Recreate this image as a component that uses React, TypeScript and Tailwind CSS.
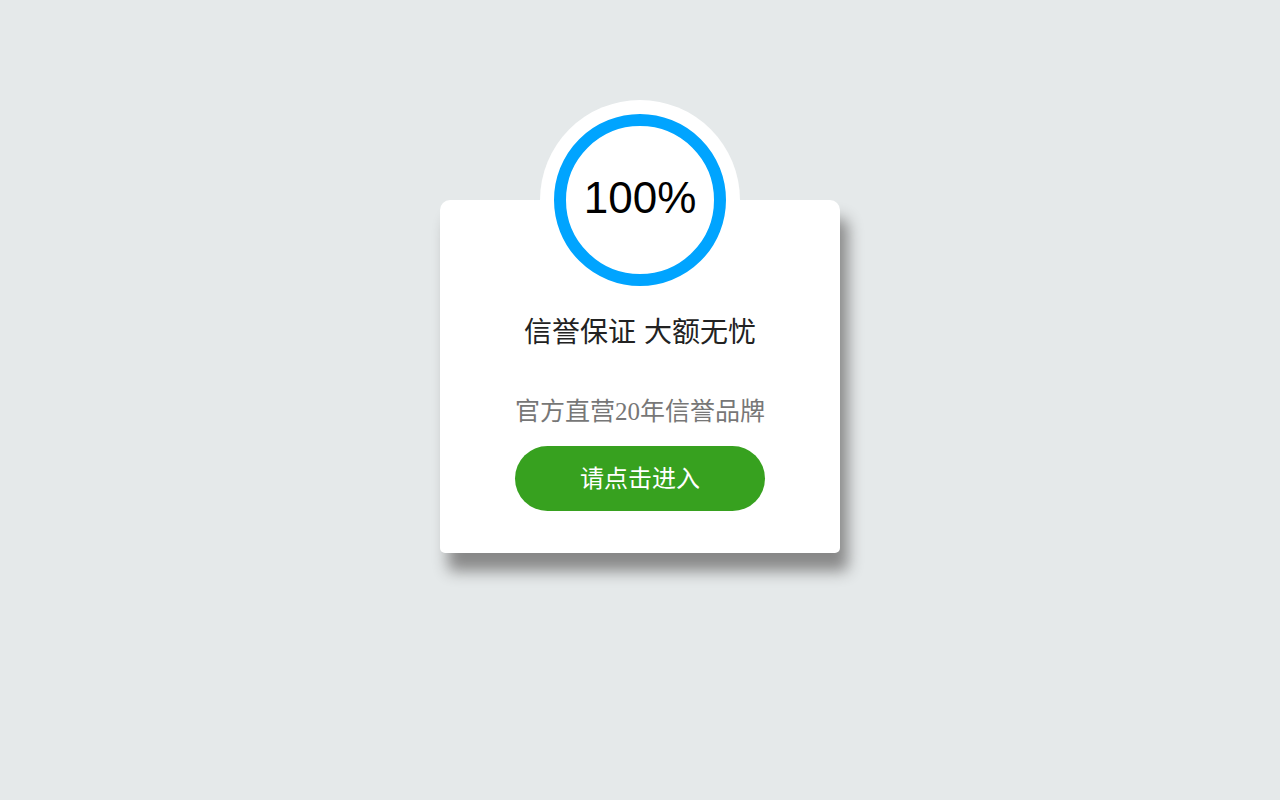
export default function App() {
  return (
    <div className="min-h-screen w-full bg-[#e5e9ea] flex justify-center" style={{ fontFamily: '"Liberation Sans", "Noto Sans CJK SC", sans-serif' }}>
      <div className="relative mt-[200px] w-[400px] h-[353px]">
        <div className="absolute left-1/2 -translate-x-1/2 -top-[100px] w-[200px] h-[200px] rounded-full bg-white" />
        <div className="absolute inset-0 bg-white rounded-t-[10px] rounded-b-[5px] shadow-[8px_18px_15px_#888]" />
        <div className="relative flex flex-col items-center">
          <div className="-mt-[86px] w-[172px] h-[172px] rounded-full border-[12px] border-[#00a4ff] bg-white flex items-center justify-center">
            <span className="text-[44px] text-black leading-none -mt-[4px]">100%</span>
          </div>
          <div className="mt-[29px] text-[28px] leading-[36px] text-[#222]">信誉保证 大额无忧</div>
          <div className="mt-[46px] text-[25px] leading-[30px] text-[#777]" style={{ fontFamily: '"Liberation Serif", "Noto Sans CJK SC", serif' }}>官方直营20年信誉品牌</div>
          <div className="mt-[19px] w-[250px] h-[65px] rounded-full bg-[#37a11f] flex items-center justify-center text-white text-[24px]">请点击进入</div>
        </div>
      </div>
    </div>
  );
}
